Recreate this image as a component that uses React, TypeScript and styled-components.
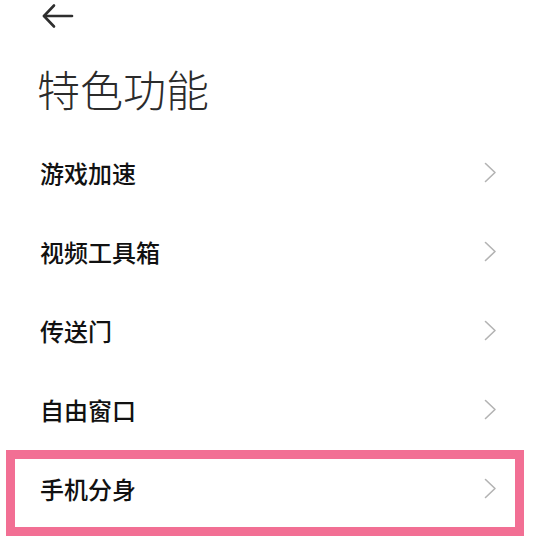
import styled, { createGlobalStyle } from 'styled-components';

const GlobalStyle = createGlobalStyle`
	html, body {
		margin: 0;
		padding: 0;
		background: #ffffff;
	}
	body {
		font-family: "Noto Sans CJK SC", "Noto Sans", sans-serif;
	}
`;

const Page = styled.div`
	width: 536px;
	height: 543px;
	background: #ffffff;
	overflow: hidden;
	display: flex;
	flex-direction: column;
`;

const TopBar = styled.div`
	height: 32px;
	display: flex;
	align-items: center;
	padding-left: 42px;
`;

const Title = styled.h1`
	margin: 34px 0 0 0;
	padding-left: 37px;
	font-size: 43px;
	line-height: 44px;
	font-weight: 300;
	color: #2b2b2b;
`;

const List = styled.div`
	margin-top: 23px;
	display: flex;
	flex-direction: column;
`;

const Row = styled.div<{ $highlight?: boolean }>`
	position: relative;
	height: 79px;
	display: flex;
	align-items: center;
	justify-content: space-between;
	padding: 0 39px 0 40px;
	${(p) => p.$highlight && `
		&::after {
			content: "";
			position: absolute;
			left: 6px;
			right: 12px;
			top: 1px;
			height: 86px;
			border: 9px solid #f26f94;
			box-sizing: border-box;
			pointer-events: none;
		}
	`}
`;

const Label = styled.span`
	font-size: 24px;
	font-weight: 500;
	color: #111111;
`;

const BackArrow = () => (
	<svg width="32" height="26" viewBox="0 0 32 26" fill="none">
		<path d="M2 13 H30" stroke="#2e2e2e" strokeWidth="2.6" strokeLinecap="round" />
		<path d="M12 2.5 L2 13 L12 23.5" stroke="#2e2e2e" strokeWidth="2.6" strokeLinecap="round" strokeLinejoin="round" />
	</svg>
);

const Chevron = () => (
	<svg width="13" height="21" viewBox="0 0 13 21" fill="none">
		<path d="M1.5 1.5 L11 10.5 L1.5 19.5" stroke="#b3b3b3" strokeWidth="1.6" strokeLinecap="round" strokeLinejoin="round" />
	</svg>
);

const items = ['游戏加速', '视频工具箱', '传送门', '自由窗口', '手机分身'];

export default function App() {
	return (
		<Page>
			<GlobalStyle />
			<TopBar>
				<BackArrow />
			</TopBar>
			<Title>特色功能</Title>
			<List>
				{items.map((name, i) => (
					<Row key={name} $highlight={i === items.length - 1}>
						<Label>{name}</Label>
						<Chevron />
					</Row>
				))}
			</List>
		</Page>
	);
}
